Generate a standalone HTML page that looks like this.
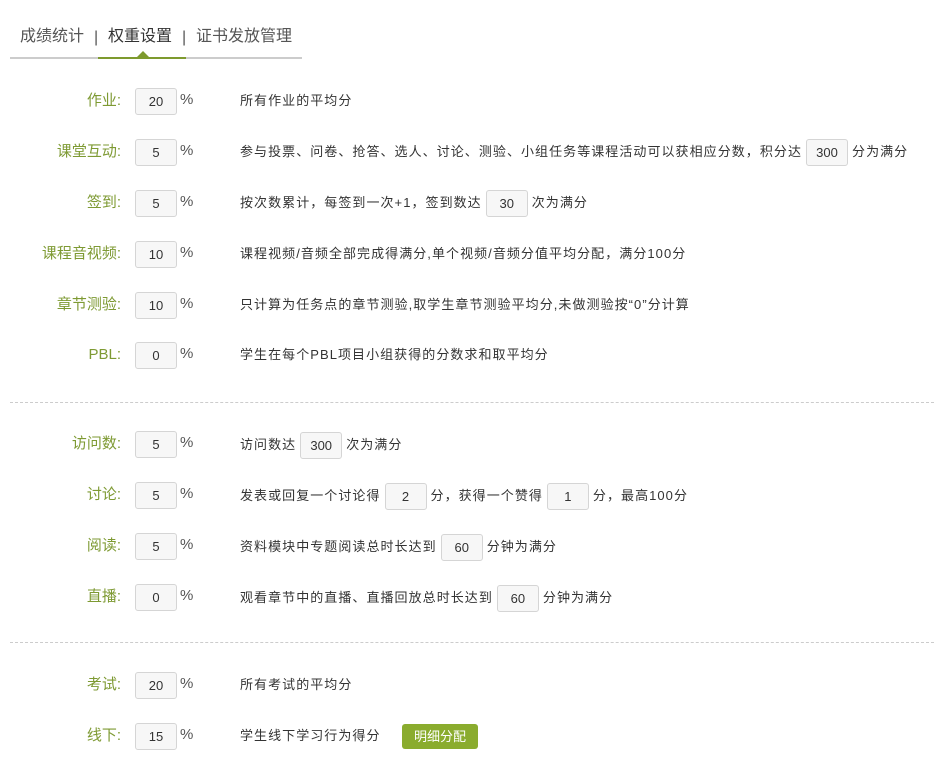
<!DOCTYPE html>
<html><head><meta charset="utf-8"><style>
body{margin:0;width:934px;height:768px;background:#fff;font-family:"Liberation Sans","Noto Sans CJK SC",sans-serif;position:relative;overflow:hidden;color:#333}
.a{position:absolute;white-space:nowrap}
.tab{top:26px;font-size:16px;color:#555;line-height:22px}
.lbl{width:121px;left:0;text-align:right;font-size:15px;color:#7e9a33;line-height:20px}
.box{position:absolute;width:40px;height:25px;border:1px solid #d5d5d5;border-radius:3px;background:#f7f7f7;text-align:center;line-height:25px;font-size:13px;color:#333}
.pct{font-size:15px;color:#555}
.d{font-size:13px;color:#333;line-height:20px;letter-spacing:1.05px}
.ib{display:inline-block;position:relative;vertical-align:middle;width:40px;height:25px;border:1px solid #d5d5d5;border-radius:3px;background:#f7f7f7;text-align:center;line-height:25px;margin:0 4px;letter-spacing:0}
.dash{position:absolute;left:10px;width:924px;border-top:1px dashed #ccc}
</style></head><body>
<div class="a tab" style="left:20px">成绩统计</div>
<div class="a tab" style="left:94px;top:27px">|</div>
<div class="a tab" style="left:108px;color:#333">权重设置</div>
<div class="a tab" style="left:182px;top:27px">|</div>
<div class="a tab" style="left:196px">证书发放管理</div>
<div class="a" style="left:10px;top:57px;width:292px;height:2px;background:#ccc"></div>
<div class="a" style="left:98px;top:57px;width:88px;height:2px;background:#7e9a2e"></div>
<div class="a" style="left:137px;top:51px;width:0;height:0;border-left:6px solid transparent;border-right:6px solid transparent;border-bottom:6px solid #7e9a2e"></div>

<div class="a lbl" style="top:91px">作业:</div><div class="box" style="left:135px;top:88px">20</div><div class="a pct" style="left:180px;top:91px">%</div><div class="a d" style="left:240px;top:91px">所有作业的平均分</div>

<div class="a lbl" style="top:142px">课堂互动:</div><div class="box" style="left:135px;top:139px">5</div><div class="a pct" style="left:180px;top:142px">%</div><div class="a d" style="left:240px;top:139px">参与投票、问卷、抢答、选人、讨论、测验、小组任务等课程活动可以获相应分数，积分达<span class="ib">300</span>分为满分</div>

<div class="a lbl" style="top:193px">签到:</div><div class="box" style="left:135px;top:190px">5</div><div class="a pct" style="left:180px;top:193px">%</div><div class="a d" style="left:240px;top:190px">按次数累计，每签到一次+1，签到数达<span class="ib">30</span>次为满分</div>

<div class="a lbl" style="top:244px">课程音视频:</div><div class="box" style="left:135px;top:241px">10</div><div class="a pct" style="left:180px;top:244px">%</div><div class="a d" style="left:240px;top:244px">课程视频/音频全部完成得满分,单个视频/音频分值平均分配，满分100分</div>

<div class="a lbl" style="top:295px">章节测验:</div><div class="box" style="left:135px;top:292px">10</div><div class="a pct" style="left:180px;top:295px">%</div><div class="a d" style="left:240px;top:295px">只计算为任务点的章节测验,取学生章节测验平均分,未做测验按“0”分计算</div>

<div class="a lbl" style="top:345px">PBL:</div><div class="box" style="left:135px;top:342px">0</div><div class="a pct" style="left:180px;top:345px">%</div><div class="a d" style="left:240px;top:345px">学生在每个PBL项目小组获得的分数求和取平均分</div>

<div class="dash" style="top:402px"></div>

<div class="a lbl" style="top:434px">访问数:</div><div class="box" style="left:135px;top:431px">5</div><div class="a pct" style="left:180px;top:434px">%</div><div class="a d" style="left:240px;top:432px">访问数达<span class="ib">300</span>次为满分</div>

<div class="a lbl" style="top:485px">讨论:</div><div class="box" style="left:135px;top:482px">5</div><div class="a pct" style="left:180px;top:485px">%</div><div class="a d" style="left:240px;top:483px">发表或回复一个讨论得<span class="ib">2</span>分，获得一个赞得<span class="ib">1</span>分，最高100分</div>

<div class="a lbl" style="top:536px">阅读:</div><div class="box" style="left:135px;top:533px">5</div><div class="a pct" style="left:180px;top:536px">%</div><div class="a d" style="left:240px;top:534px">资料模块中专题阅读总时长达到<span class="ib">60</span>分钟为满分</div>

<div class="a lbl" style="top:587px">直播:</div><div class="box" style="left:135px;top:584px">0</div><div class="a pct" style="left:180px;top:587px">%</div><div class="a d" style="left:240px;top:585px">观看章节中的直播、直播回放总时长达到<span class="ib">60</span>分钟为满分</div>

<div class="dash" style="top:642px"></div>

<div class="a lbl" style="top:675px">考试:</div><div class="box" style="left:135px;top:672px">20</div><div class="a pct" style="left:180px;top:675px">%</div><div class="a d" style="left:240px;top:675px">所有考试的平均分</div>

<div class="a lbl" style="top:726px">线下:</div><div class="box" style="left:135px;top:723px">15</div><div class="a pct" style="left:180px;top:726px">%</div><div class="a d" style="left:240px;top:726px">学生线下学习行为得分</div>
<div class="a" style="left:402px;top:724px;width:76px;height:25px;background:#8aac2e;border-radius:3px;color:#fff;font-size:13px;text-align:center;line-height:25px">明细分配</div>
</body></html>
